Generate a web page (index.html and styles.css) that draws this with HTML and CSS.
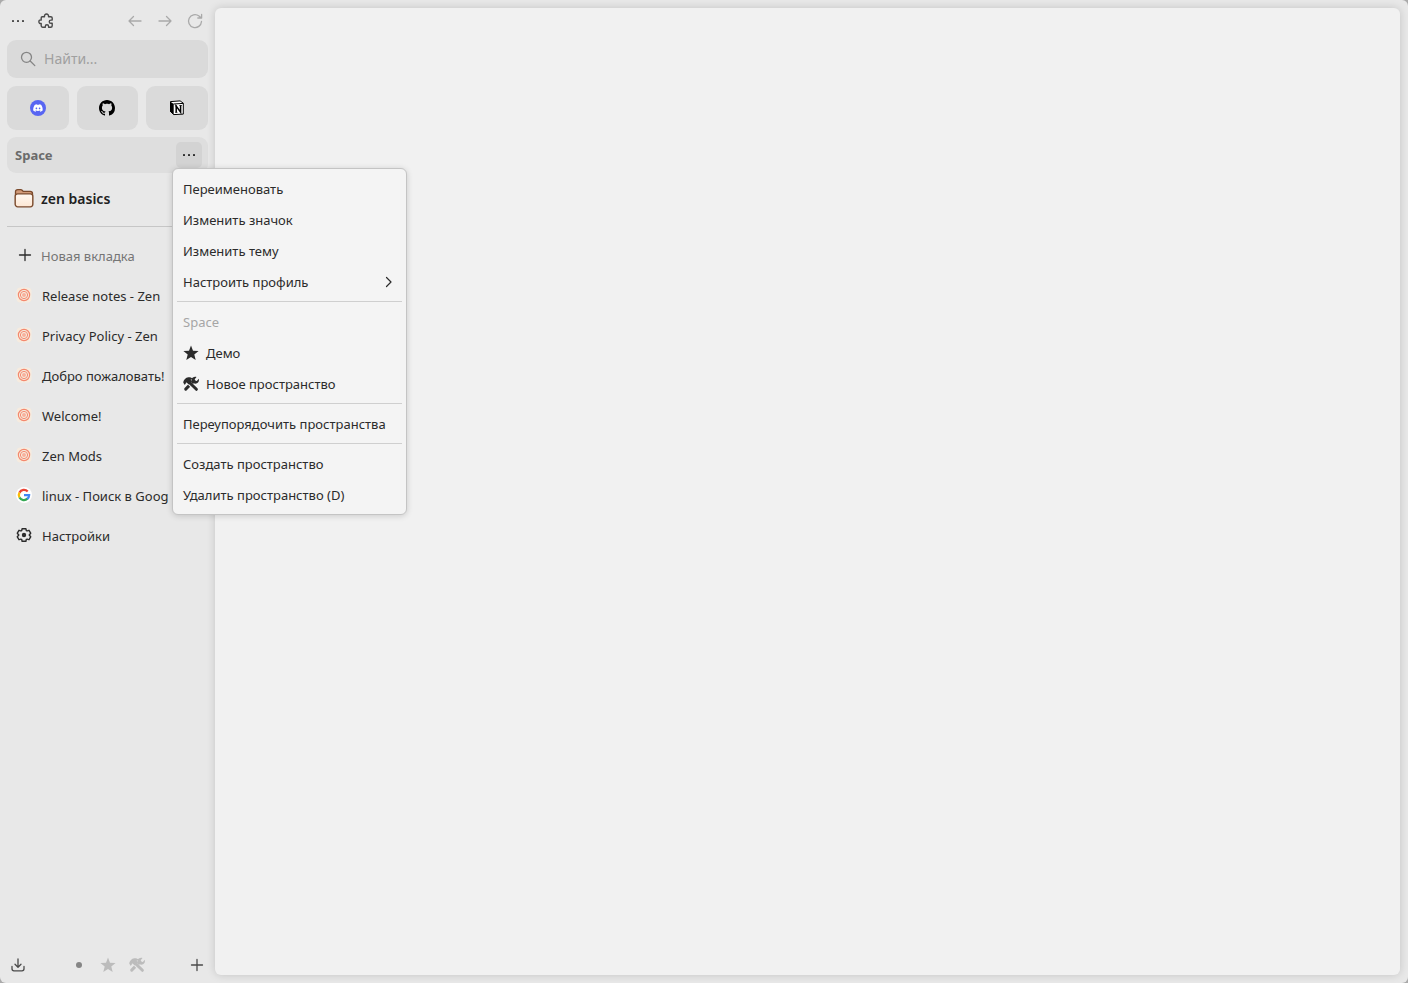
FILE: index.html
```html
<!DOCTYPE html>
<html lang="ru">
<head>
<meta charset="utf-8">
<title>Zen</title>
<link rel="stylesheet" href="styles.css">
</head>
<body>
<svg class="sprite" aria-hidden="true">
  <symbol id="dots" viewBox="0 0 16 16"><g fill="currentColor"><rect x="2" y="7" width="2" height="2" rx=".6"/><rect x="7" y="7" width="2" height="2" rx=".6"/><rect x="12" y="7" width="2" height="2" rx=".6"/></g></symbol>
  <symbol id="zen" viewBox="0 0 16 16"><rect x=".5" y=".5" width="15" height="15" rx="4" fill="#f6ebdf"/><g fill="none" stroke="#f4886e"><circle cx="8" cy="8" r="5.600" stroke-width="1.200"/><circle cx="8" cy="8" r="3.600" stroke-width="1"/></g><circle cx="8" cy="8" r="2" fill="#f7b09c"/></symbol>
  <symbol id="star" viewBox="0 0 16 16"><path fill="currentColor" d="M8 .6l2 5.1 5.600.4-4.300 3.500 1.400 5.400L8 12l-4.700 3 1.400-5.400L.4 6.100 6 5.700z"/></symbol>
  <symbol id="tools" viewBox="0 0 16 16"><path fill="none" stroke="currentColor" stroke-width="3" stroke-linecap="round" d="M2.700 13.100l8.200-8.200"/><path fill="none" stroke="var(--cut)" stroke-width="4" d="M5.500 6.300l5.500 5.500"/><path fill="none" stroke="currentColor" stroke-width="3" stroke-linecap="round" d="M5.600 5.700l7.800 7.600"/><path fill="currentColor" d="M.2 6.300C.7 4 2.700 1.500 5.300 1.300c1.800-.1 3.100.4 4 1.300L7.700 3.800l1 2-3 2.800-2-2.100-.8.200-.3 1.400-1.200.700zM13.500.9l-2 2.500.8 1.300 1.500.3 2-2.300c.5 2.200-.4 3.900-1.800 4.600-1.100.6-2.400.5-3.300 0L8.500 5c-.2-1.400.3-2.700 1.400-3.500 1-.8 2.300-1 3.600-.6z"/></symbol>
  <symbol id="plus" viewBox="0 0 16 16"><path d="M8 2.500v11M2.500 8h11" stroke="currentColor" stroke-width="1.300" stroke-linecap="round"/></symbol>
</svg>

<div class="window">
  <aside class="sidebar">
    <header class="toolbar">
      <button class="tool" aria-label="Меню"><svg class="icon"><use href="#dots"/></svg></button>
      <button class="tool tool-ext" aria-label="Расширения"><svg class="icon" viewBox="0 0 16 16"><path fill="none" stroke="currentColor" stroke-width="1.400" stroke-linejoin="round" d="M4.200 3.700h2.300C5.800.1 11.200.1 10.500 3.700h2.300q1.400 0 1.400 1.400v2h-1.300c-2.200 0-2.200 3.100 0 3.100h1.300v2.500q0 1.500-1.500 1.500h-2.100v-.8c0-2.300-3.300-2.300-3.300 0v.8H4.600q-1.400 0-1.400-1.400v-2.300C.1 11.200.1 6.300 3.200 7V4.900q0-1.200 1-1.200z"/></svg></button>
      <button class="tool faded" aria-label="Назад"><svg class="icon" viewBox="0 0 16 16"><path fill="none" stroke="currentColor" stroke-width="1.300" stroke-linecap="round" stroke-linejoin="round" d="M14 8H2M6.500 3.500L2 8l4.500 4.500"/></svg></button>
      <button class="tool faded" aria-label="Вперёд"><svg class="icon" viewBox="0 0 16 16"><path fill="none" stroke="currentColor" stroke-width="1.300" stroke-linecap="round" stroke-linejoin="round" d="M2 8h12M9.500 3.500L14 8l-4.500 4.500"/></svg></button>
      <button class="tool faded" aria-label="Обновить"><svg class="icon" viewBox="0 0 16 16"><path fill="none" stroke="currentColor" stroke-width="1.300" stroke-linecap="round" stroke-linejoin="round" d="M14.500 8.500A6.500 6.500 0 1 1 12 3l2.300 2M14.600 1.500V5h-3.800"/></svg></button>
    </header>

    <label class="search">
      <svg class="icon" viewBox="0 0 16 16"><g fill="none" stroke="currentColor" stroke-width="1.300" stroke-linecap="round"><circle cx="6.500" cy="6.300" r="5"/><path d="M10.200 10l4.600 4.600"/></g></svg>
      <input type="text" placeholder="Найти..." aria-label="Найти">
    </label>

    <nav class="essentials">
      <button class="essential" aria-label="Discord"><svg class="icon" viewBox="0 0 16 16"><circle cx="8" cy="8" r="8" fill="#5865f2"/><path fill="#fff" transform="translate(3.200 3.200) scale(.4)" d="M20.317 4.370a19.800 19.800 0 0 0-4.885-1.515c-.25.400-.46.850-.608 1.250a18.300 18.300 0 0 0-5.487 0c-.17-.44-.4-.87-.617-1.250A19.700 19.700 0 0 0 3.677 4.370C.533 9.046-.32 13.580.099 18.058A20 20 0 0 0 6.100 21.090c.46-.63.870-1.290 1.220-1.990a13 13 0 0 1-1.870-.9l.37-.29c3.930 1.790 8.180 1.790 12.060 0l.37.290c-.6.360-1.220.650-1.870.9.360.7.770 1.360 1.220 1.990a20 20 0 0 0 6.030-3.030c.5-5.180-.84-9.680-3.540-13.690zM8.020 15.330c-1.180 0-2.160-1.090-2.160-2.420s.96-2.420 2.160-2.420 2.170 1.090 2.160 2.420-.96 2.420-2.160 2.420zm7.970 0c-1.180 0-2.150-1.090-2.150-2.420s.95-2.420 2.150-2.420 2.180 1.090 2.160 2.420-.94 2.420-2.160 2.420z"/></svg></button>
      <button class="essential" aria-label="GitHub"><svg class="icon" viewBox="0 0 16 16"><path fill="#000" d="M8 0C3.580 0 0 3.580 0 8c0 3.540 2.290 6.530 5.470 7.590.4.070.55-.17.55-.38 0-.19-.01-.82-.01-1.490-2.010.37-2.530-.49-2.690-.94-.09-.23-.48-.94-.82-1.130-.28-.15-.68-.52-.01-.53.63-.01 1.080.58 1.230.82.72 1.210 1.870.87 2.330.66.07-.52.28-.87.51-1.070-1.780-.2-3.640-.89-3.640-3.950 0-.87.31-1.590.82-2.150-.08-.2-.36-1.020.08-2.120 0 0 .67-.21 2.200.82.64-.18 1.320-.27 2-.27s1.360.09 2 .27c1.530-1.040 2.200-.82 2.200-.82.44 1.100.16 1.920.08 2.120.51.56.82 1.270.82 2.150 0 3.070-1.870 3.750-3.650 3.950.29.25.54.73.54 1.480 0 1.070-.01 1.930-.01 2.200 0 .21.150.46.550.38A8.010 8.010 0 0 0 16 8c0-4.420-3.580-8-8-8z"/></svg></button>
      <button class="essential" aria-label="Notion"><svg class="icon" viewBox="0 0 16 16"><path fill="#fff" stroke="#000" stroke-linejoin="round" d="M1.500 1.600l9.600-.7 3.200 2.300v10.900l-9.600.5-3.200-3.100z"/><path fill="#000" d="M1.200 1.500l3.500 2.600v10.600l-3.500-3.500z"/><path fill="none" stroke="#000" d="M4.500 4l9.800-.6"/><path fill="none" stroke="#000" stroke-width="1.500" d="M7.200 12.300V6l4.400 6.100V5.600"/><path fill="none" stroke="#000" stroke-width=".8" d="M5.900 5.900l2-.1M6.200 12.400h2.200M10.300 5.500h2.500"/></svg></button>
    </nav>

    <section class="space">
      <h1 class="space-name">Space</h1>
      <div class="space-actions">
        <button class="space-more" aria-label="Действия" aria-expanded="true"><svg class="icon"><use href="#dots"/></svg></button>
        <div class="menu" role="menu">
          <button class="item" role="menuitem">Переименовать</button>
          <button class="item" role="menuitem">Изменить значок</button>
          <button class="item" role="menuitem">Изменить тему</button>
          <button class="item" role="menuitem">Настроить профиль<svg class="icon chevron" viewBox="0 0 16 16"><path d="M6.500 3.500L11 8l-4.500 4.500" fill="none" stroke="currentColor" stroke-width="1.200" stroke-linecap="round" stroke-linejoin="round"/></svg></button>
          <hr class="line">
          <button class="item" role="menuitem" disabled>Space</button>
          <button class="item" role="menuitem"><svg class="icon"><use href="#star"/></svg>Демо</button>
          <button class="item" role="menuitem"><svg class="icon"><use href="#tools"/></svg>Новое пространство</button>
          <hr class="line">
          <button class="item" role="menuitem">Переупорядочить пространства</button>
          <hr class="line">
          <button class="item" role="menuitem">Создать пространство</button>
          <button class="item" role="menuitem">Удалить пространство (D)</button>
        </div>
      </div>
    </section>

    <button class="folder"><svg class="folder-icon" viewBox="0 0 20 20"><defs><linearGradient id="paper" x2="0" y2="1"><stop stop-color="#fff9f3"/><stop offset="1" stop-color="#fde6d3"/></linearGradient></defs><path d="M1.500 15V2.700Q1.500.7 3.700.7h3q1 0 1.700.8l.8.900h7.100q2.200 0 2.200 2.200V15z" fill="#d29a78" stroke="#7b4a2c" stroke-width="1.300"/><rect x="1.200" y="4.800" width="17.600" height="13" rx="2.500" fill="url(#paper)" stroke="#7b4a2c" stroke-width="1.300"/></svg>zen basics</button>
    <hr class="divider">

    <nav class="tabs">
      <button class="tab new-tab"><svg class="icon"><use href="#plus"/></svg><span>Новая вкладка</span></button>
      <button class="tab"><svg class="icon"><use href="#zen"/></svg><span>Release notes - Zen</span></button>
      <button class="tab"><svg class="icon"><use href="#zen"/></svg><span>Privacy Policy - Zen</span></button>
      <button class="tab"><svg class="icon"><use href="#zen"/></svg><span>Добро пожаловать!</span></button>
      <button class="tab"><svg class="icon"><use href="#zen"/></svg><span>Welcome!</span></button>
      <button class="tab"><svg class="icon"><use href="#zen"/></svg><span>Zen Mods</span></button>
      <button class="tab"><svg class="icon" viewBox="0 0 16 16"><circle cx="8" cy="8" r="8" fill="#fff"/><g fill="none" stroke-width="2.300"><path stroke="#ea4335" d="M3.440 5.600A5.100 5.100 0 0 1 11.700 4.500"/><path stroke="#fbbc05" d="M3.500 10.500A5.100 5.100 0 0 1 3.440 5.600"/><path stroke="#34a853" d="M11.500 11.700A5.100 5.100 0 0 1 3.500 10.500"/><path stroke="#4285f4" d="M8 8.200h5.100a5.100 5.100 0 0 1-1.900 3.800"/></g></svg><span>linux - Поиск в Goog</span></button>
      <button class="tab"><svg class="icon" viewBox="0 0 16 16"><path fill="none" stroke="currentColor" stroke-width="1.400" stroke-linejoin="round" d="M5.700 3.600L6.100 1.700h3.800l.4 1.900q.9.400 1.600.1l1.100-.4 1.700 2.900L13.200 8l1.500 1.800-1.700 2.900-1.100-.4q-.7-.3-1.600.1l-.4 1.900H6.100l-.4-1.900q-.9-.4-1.600-.1l-1.100.4-1.700-2.900L2.800 8 1.300 6.200 3 3.300l1.100.4q.7.300 1.600-.1z"/><circle cx="8" cy="8" r="2.200" fill="currentColor"/></svg><span>Настройки</span></button>
    </nav>

    <footer class="bottom">
      <button class="tool" aria-label="Загрузки"><svg class="icon" viewBox="0 0 16 16"><path fill="none" stroke="currentColor" stroke-width="1.300" stroke-linecap="round" stroke-linejoin="round" d="M8 2v8M5 7.300l3 3 3-3M2 9.500v2.300q0 2 2 2h8q2 0 2-2V9.500"/></svg></button>
      <div class="spaces">
        <button class="tool dot" aria-label="Space"><svg class="icon" viewBox="0 0 16 16"><circle cx="8" cy="8" r="3" fill="currentColor"/></svg></button>
        <button class="tool pale" aria-label="Демо"><svg class="icon"><use href="#star"/></svg></button>
        <button class="tool pale" aria-label="Новое пространство"><svg class="icon"><use href="#tools"/></svg></button>
      </div>
      <button class="tool" aria-label="Создать"><svg class="icon"><use href="#plus"/></svg></button>
    </footer>
  </aside>
  <main class="page"></main>
</div>
</body>
</html>
```

FILE: styles.css
```css
* { box-sizing: border-box; }
body {
  margin: 0;
  background: #aaa;
  color: #2b2b2b;
  font: 13px/20px "Noto Sans", sans-serif;
}
button, input { font: inherit; color: inherit; }
button { padding: 0; border: 0; background: none; text-align: left; white-space: nowrap; }
.sprite { position: absolute; width: 0; height: 0; }
.icon { display: block; flex: none; width: 16px; height: 16px; --cut: #f4f4f4; }

.window {
  display: grid;
  grid-template-columns: 208px minmax(0, 1fr);
  gap: 7px;
  min-height: 100vh;
  padding: 0 8px 0 0;
  border-radius: 6px;
  background: #e8e8e8;
}
.page {
  margin: 8px 0;
  border-radius: 6px;
  background: #f1f1f1;
  box-shadow: 0 0 8px rgba(0, 0, 0, .16);
}
.sidebar { display: flex; flex-direction: column; padding-left: 7px; }

.toolbar { display: flex; align-items: center; height: 40px; padding: 2px 5px 0 3px; gap: 14px; }
.tool { color: #4a4a4a; }
.toolbar .tool-ext { margin: 0 auto 0 -2px; }
.faded { color: #a9a9a9; }

.search {
  display: flex;
  align-items: center;
  gap: 8px;
  height: 38px;
  padding: 0 13px;
  border-radius: 9px;
  background: #dadada;
  color: #858585;
}
.search input { flex: 1; min-width: 0; padding: 0; border: 0; outline: 0; background: none; font-size: 14px; }
.search input::placeholder { color: #a0a0a0; opacity: 1; }

.essentials { display: grid; grid-template-columns: repeat(3, 1fr); gap: 8px; margin-top: 8px; }
.essential { display: flex; align-items: center; justify-content: center; height: 44px; border-radius: 9px; background: #dadada; }

.space {
  display: flex;
  align-items: center;
  justify-content: space-between;
  height: 36px;
  margin-top: 7px;
  padding: 0 6px 0 8px;
  border-radius: 9px;
  background: #dedede;
}
.space-name { margin: 0; font-size: 13px; font-weight: 700; color: #6b6b6b; }
.space-actions { position: relative; }
.space-more { display: flex; align-items: center; justify-content: center; width: 26px; height: 26px; border-radius: 5px; background: #d3d3d3; }

.menu {
  position: absolute;
  z-index: 1;
  top: 100%;
  left: -4px;
  display: flex;
  flex-direction: column;
  width: 235px;
  padding: 4px;
  border: 1px solid #c4c4c4;
  border-radius: 6px;
  background: #f4f4f4;
  box-shadow: 0 1px 6px rgba(0, 0, 0, .16);
}
.item { display: flex; align-items: center; gap: 7px; height: 31px; padding: 0 6px; }
.item:disabled { color: #a6a6a6; }
.chevron { margin-left: auto; }
.line { width: 100%; height: 1px; margin: 4px 0; border: 0; background: #cfcfcf; }

.folder { display: flex; align-items: center; gap: 7px; height: 36px; margin-top: 8px; padding-left: 7px; font-size: 14px; font-weight: 600; color: #202020; }
.folder-icon { width: 20px; height: 20px; }
.divider { width: 100%; height: 1px; margin: 9px 0; border: 0; background: #c6c6c6; }

.tabs { display: flex; flex-direction: column; }
.tab { display: flex; align-items: center; gap: 10px; height: 40px; padding-left: 9px; }
.tab .icon { margin-bottom: 2px; }
.new-tab { gap: 8px; padding-left: 10px; }
.new-tab span { color: #757575; }

.bottom { display: flex; align-items: center; justify-content: space-between; height: 36px; margin-top: auto; padding: 0 3px; }
.spaces { display: flex; gap: 13px; }
.spaces .icon { --cut: #e8e8e8; }
.dot { color: #858585; }
.pale { color: #bcbcbc; }
```
